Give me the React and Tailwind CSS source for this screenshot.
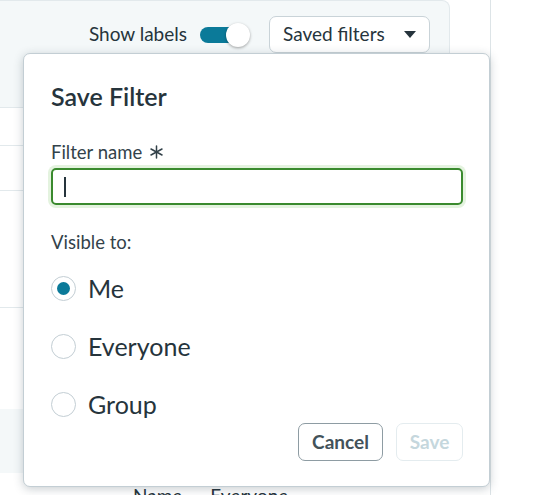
export default function App() {
  return (
    <div className="relative w-[544px] h-[495px] overflow-hidden bg-white text-[#26343c]" style={{ fontFamily: "Lato, 'Noto Sans', sans-serif" }}>
      {/* background page */}
      <div className="w-[491px] h-full border-r border-[#dde4e7] flex flex-col">
        <div className="shrink-0 w-[450px] h-[108px] bg-[#f4f8f9] rounded-tr-[8px] border-t border-r border-b border-[#e2e9ec] flex justify-end items-start pt-[15px] pr-[19px]">
          <div className="flex items-center h-[37px]">
            <span className="text-[19px] mr-[13px]">Show labels</span>
            <div className="relative w-[50px] h-[24px] mr-[19px]">
              <div className="absolute left-0 top-[4px] w-[40px] h-[16px] rounded-full bg-[#0b7a99]"></div>
              <div className="absolute left-[26px] top-0 w-[24px] h-[24px] rounded-full bg-white shadow-[0_1px_3px_rgba(0,0,0,0.35)]"></div>
            </div>
            <div className="h-[37px] w-[161px] rounded-[7px] border border-[#c9d3d8] bg-white flex items-center pl-[13px] pr-[13px] justify-between">
              <span className="text-[19px]">Saved filters</span>
              <svg width="12" height="7" viewBox="0 0 12 7"><path d="M0 0h12L6 7z" fill="#26343c" /></svg>
            </div>
          </div>
        </div>
        <div className="shrink-0 h-[38px] border-b border-[#e2e9ec]"></div>
        <div className="shrink-0 h-[45px] border-b border-[#e2e9ec]"></div>
        <div className="shrink-0 h-[117px] border-b border-[#e2e9ec]"></div>
        <div className="shrink-0 h-[101px]"></div>
        <div className="shrink-0 h-[64px] bg-[#f4f8f9]"></div>
        <div className="shrink-0 pt-[11px] pl-[133px] text-[19px] leading-[24px] flex gap-[28px]">
          <span>Name</span>
          <span>Everyone</span>
        </div>
      </div>

      {/* popover */}
      <div className="absolute left-[23px] top-[53px] w-[467px] h-[434px] bg-white rounded-[7px] border border-[#c3ced4] shadow-[0_2px_10px_rgba(40,60,70,0.25)] pl-[27px] pr-[26px] pt-[26px] flex flex-col">
        <div className="text-[25px] font-semibold leading-[32px]">Save Filter</div>
        <div className="mt-[28px] text-[18.5px] leading-[24px] flex items-center text-[#33424a] h-[24px]">
          <span>Filter name</span>
          <svg className="ml-[8px] mb-[1px]" width="13" height="14" viewBox="0 0 13 14">
            <g stroke="#33424a" strokeWidth="1.5" strokeLinecap="round">
              <path d="M6.5 1v12" />
              <path d="M1 4l11 6" />
              <path d="M12 4L1 10" />
            </g>
          </svg>
        </div>
        <div className="mt-[4px] h-[37px] rounded-[5px] border-2 border-[#3a8a2e] shadow-[0_0_0_3px_#e4f3df] flex items-center pl-[11px]">
          <div className="w-[2px] h-[20px] bg-[#26343c]"></div>
        </div>
        <div className="mt-[25px] text-[18.5px] leading-[24px] text-[#33424a]">Visible to:</div>
        <div className="mt-[21px] flex flex-col gap-[32px]">
          {[["Me", true], ["Everyone", false], ["Group", false]].map(([l, c]) => (
            <div key={l} className="flex items-center h-[26px]">
              <div className="w-[25px] h-[25px] rounded-full border border-[#c3ced4] flex items-center justify-center">
                {c && <div className="w-[13px] h-[13px] rounded-full bg-[#0b7a99]"></div>}
              </div>
              <span className="ml-[12px] text-[25px] leading-[26px]">{l}</span>
            </div>
          ))}
        </div>
        <div className="mt-[6px] flex justify-end gap-[13px]">
          <div className="h-[38px] w-[85px] rounded-[7px] border border-[#8e9ca3] flex items-center justify-center text-[19px] font-bold text-[#43525a]">Cancel</div>
          <div className="h-[38px] w-[67px] rounded-[7px] border border-[#e4ecef] flex items-center justify-center text-[19px] font-bold text-[#c5d7dd]">Save</div>
        </div>
      </div>
    </div>
  );
}
